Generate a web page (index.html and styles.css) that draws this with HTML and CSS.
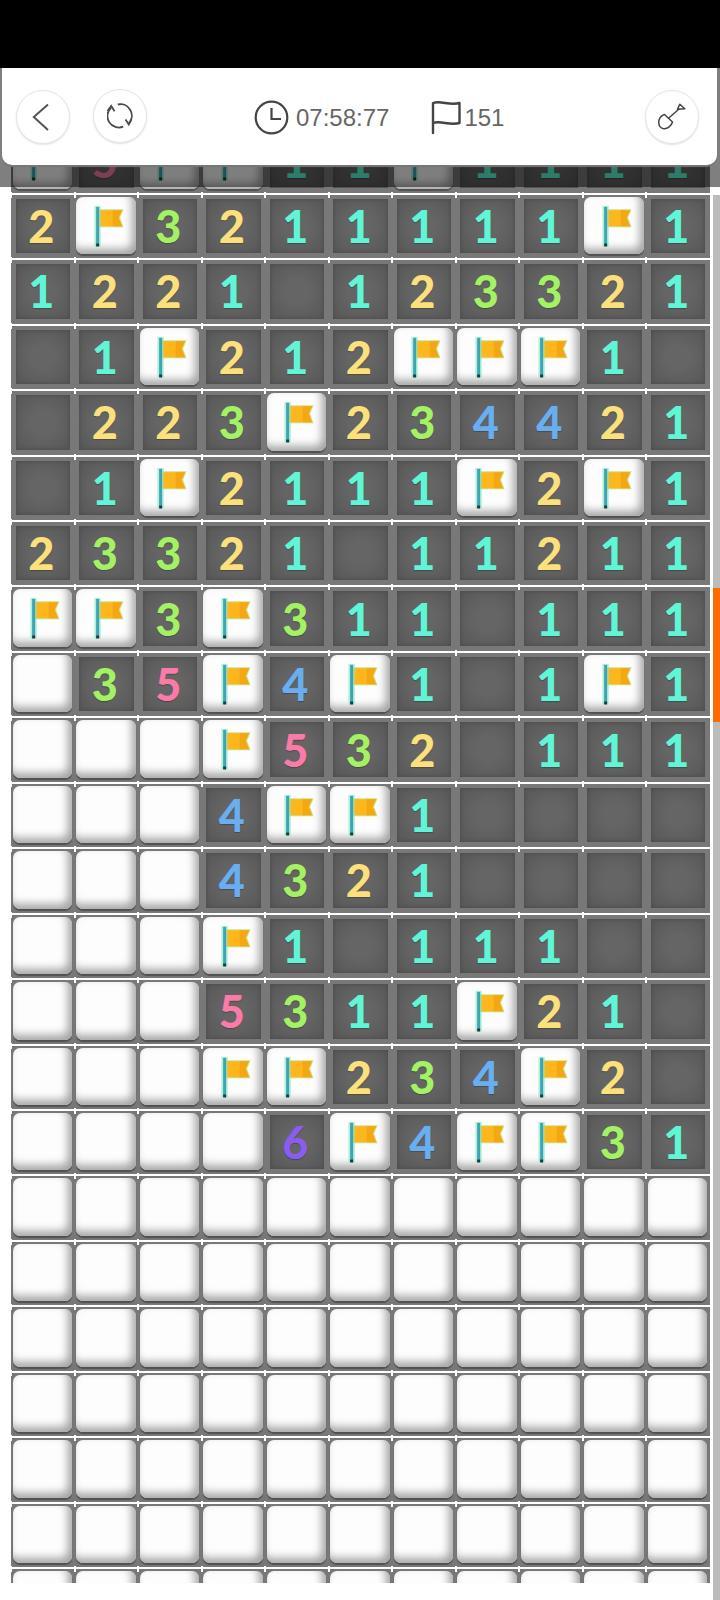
FILE: index.html
```html
<!DOCTYPE html>
<html lang="en">
<head>
    <meta charset="UTF-8">
    <meta name="viewport" content="width=device-width, initial-scale=1.0">
    <title>Minesweeper</title>
    <link rel="stylesheet" href="styles.css">
</head>
<body>
    <div class="status-bar"></div>

    <main class="game">
        <header class="game-header">
            <button class="round-btn">
                <svg width="24" height="30" viewBox="0 0 24 30"><path d="M17 2.500 L2.800 15 L17 28" fill="none" stroke="#555" stroke-width="2"/></svg>
            </button>
            <button class="round-btn refresh-btn">
                <svg width="26" height="26" viewBox="0 0 26 26" fill="none" stroke="#4a4a4a" stroke-width="1.8">
                    <path d="M10.800 1.500 A11.500 11.500 0 0 1 21.800 20.500"/>
                    <path d="M18.500 16.500 L21.800 21.500 L24.500 16"/>
                    <path d="M16.200 23.700 A11.500 11.500 0 0 1 4.200 4.500"/>
                    <path d="M0.500 8 L4.200 2.800 L7.500 8.200"/>
                </svg>
            </button>
            <div class="game-stats">
                <svg width="35" height="35" viewBox="0 0 35 35" fill="none" stroke="#444" stroke-width="2.2">
                    <circle cx="17.5" cy="17.5" r="15.8"/>
                    <path d="M17.5 8 V19 H27"/>
                </svg>
                <span class="stat-text time-text">07:58:77</span>
                <svg width="30" height="35" viewBox="0 0 30 35" fill="none" stroke="#444" stroke-width="2.4" stroke-linejoin="round" stroke-linecap="round">
                    <path d="M2 33 V3 C10 0 18 6 28.500 3 V23 C18 26 10 20 2 23"/>
                </svg>
                <span class="stat-text count-text">151</span>
            </div>
            <button class="round-btn shovel-btn">
                <svg width="28" height="28" viewBox="0 0 28 28" fill="none" stroke="#444" stroke-width="1.5" stroke-linejoin="round">
                    <path d="M6.500 11.500 L14.500 19 C13.500 23 9 26.500 5 25.500 C1.500 24.500 0.300 21 1 17 C1.800 14.500 3.500 12.500 6.500 11.500 Z"/>
                    <path d="M10.500 15.300 L21.300 5.800"/>
                    <path d="M21.800 1.300 L26.800 5.700 L19.500 6.300 Z"/>
                </svg>
            </button>
        </header>
        <div class="header-shade"></div>

        <div id="board" class="board"></div>
    </main>

    <div class="scroll-track">
        <div class="scroll-thumb"></div>
    </div>

    <svg width="0" height="0" class="defs">
        <symbol id="flag" viewBox="0 0 64 64">
            <path d="M24 14.500 H49 L45.500 23 L49 32.500 H24 Z" fill="#bcd85a" opacity="0.75"/>
            <path d="M24.500 15.500 H47.500 L44 23 L47.500 31.500 H24.500 Z" fill="#fdb61c"/>
            <path d="M38 15.500 H47.500 L44 23 L47.500 31.500 H38 Z" fill="#f3a712"/>
            <rect x="19.500" y="11" width="6.500" height="41" fill="#86ebc4" opacity="0.65"/>
            <rect x="21.300" y="12" width="3" height="39" fill="#3fa3b5"/>
            <rect x="21.300" y="49" width="3" height="3" fill="#1d3b3b"/>
        </symbol>
    </svg>

    <script>
        // U = not opened, F = flag, 0 = empty opened cell
        const rows = [
            'F5FF11F1111',
            '2F3211111F1',
            '12210123321',
            '01F212FFF10',
            '0223F234421',
            '01F2111F2F1',
            '23321011211',
            'FF3F3110111',
            'U35F4F101F1',
            'UUUF5320111',
            'UUU4FF10000',
            'UUU43210000',
            'UUUF1011100',
            'UUU5311F210',
            'UUUFF234F20',
            'UUUU6F4FF31',
            'UUUUUUUUUUU',
            'UUUUUUUUUUU',
            'UUUUUUUUUUU',
            'UUUUUUUUUUU',
            'UUUUUUUUUUU',
            'UUUUUUUUUUU',
            'UUUUUUUUUUU'
        ];

        const board = document.getElementById('board');

        rows.forEach(function (row) {
            for (const value of row) {
                const cell = document.createElement('div');
                cell.className = 'cell';

                if (value === 'U' || value === 'F') {
                    cell.classList.add('closed');
                } else {
                    cell.classList.add('open');
                }

                if (value === 'F') {
                    cell.innerHTML = '<svg class="flag" viewBox="0 0 64 64"><use href="#flag"></use></svg>';
                } else if (value !== 'U' && value !== '0') {
                    cell.classList.add('num-' + value);
                    cell.textContent = value;
                }

                board.appendChild(cell);
            }
        });
    </script>
</body>
</html>
```
FILE: styles.css
```css
body {
    position: relative;
    margin: 0;
    height: 1600px;
    overflow: hidden;
    background: #fff;
    font-family: "Liberation Sans", Arial, sans-serif;
}
.status-bar {
    height: 68px;
    background: #000;
}
.defs {
    position: absolute;
}
.game {
    position: relative;
    height: 1515px;
    padding: 61.4px 0 0 11px;
    box-sizing: border-box;
    overflow: hidden;
}
.game-header {
    position: absolute;
    top: 0;
    left: 2px;
    right: 3px;
    height: 97px;
    z-index: 3;
    box-sizing: border-box;
    padding: 22px 18px 0 14px;
    display: flex;
    align-items: flex-start;
    background: #fff;
    border-radius: 0 0 10px 10px;
    box-shadow: 0 2px 1px #777;
}
.round-btn {
    width: 54px;
    height: 54px;
    flex: none;
    padding: 0;
    display: flex;
    align-items: center;
    justify-content: center;
    background: #fff;
    border: 1px solid #e6e6e6;
    border-radius: 50%;
    box-shadow: 0 1px 2px #e0e0e0;
}
.refresh-btn {
    margin: -1px 0 0 23px;
}
.game-stats {
    display: flex;
    align-items: center;
    margin: 10px 0 0 107px;
    height: 35px;
}
.stat-text {
    font-size: 24px;
    color: #666;
}
.time-text {
    margin: 0 42px 0 7px;
}
.count-text {
    margin-left: 3px;
}
.shovel-btn {
    margin-left: auto;
}
.header-shade {
    position: absolute;
    top: 0;
    left: 0;
    right: 0;
    height: 119px;
    z-index: 2;
    background: rgba(0, 0, 0, 0.5);
}
.board {
    width: 698.5px;
    display: grid;
    grid-template-columns: repeat(11, 63.5px);
    grid-auto-rows: 63.45px;
    row-gap: 2px;
}
.cell {
    position: relative;
    z-index: 0;
    box-sizing: border-box;
    display: flex;
    align-items: center;
    justify-content: center;
    background: #787878;
    font-family: Lato, "Liberation Sans", sans-serif;
    font-weight: 900;
    font-size: 45px;
    line-height: 1;
}
/* little white ticks where the grid lines cross */
.cell::before {
    content: "";
    position: absolute;
    top: -3px;
    left: -1px;
    width: 2px;
    height: 6px;
    background: #fff;
}
.open {
    padding-right: 3px;
    text-shadow: 0 1px 1px rgba(0, 0, 0, 0.25);
}
.open::after {
    content: "";
    position: absolute;
    z-index: -1;
    top: 4px;
    left: 4.5px;
    right: 4.5px;
    bottom: 5px;
    background: radial-gradient(circle, #656565 30%, #575757 100%);
    box-shadow: inset 0 0 4px #4a4a4a;
}
.closed::after {
    content: "";
    position: absolute;
    z-index: -1;
    top: 2px;
    left: 1.5px;
    right: 2.5px;
    bottom: 4px;
    background: #fdfdfd;
    border-radius: 7px;
    box-shadow: inset -4px -5px 8px #a4a4a4, 0 2px 1px #505050;
}
.flag {
    width: 63.5px;
    height: 63.4px;
}
.num-1 { color: #5ff5d6; }
.num-2 { color: #fbe07c; }
.num-3 { color: #a4f264; }
.num-4 { color: #68aef0; }
.num-5 { color: #fb7aa8; }
.num-6 { color: #8a5cf0; }
.scroll-track {
    position: absolute;
    top: 195px;
    right: 0;
    bottom: 0;
    width: 7px;
    background: #bbb;
}
.scroll-thumb {
    position: absolute;
    top: 393px;
    left: 0;
    right: 0;
    height: 134px;
    background: #ff6a00;
}
```
